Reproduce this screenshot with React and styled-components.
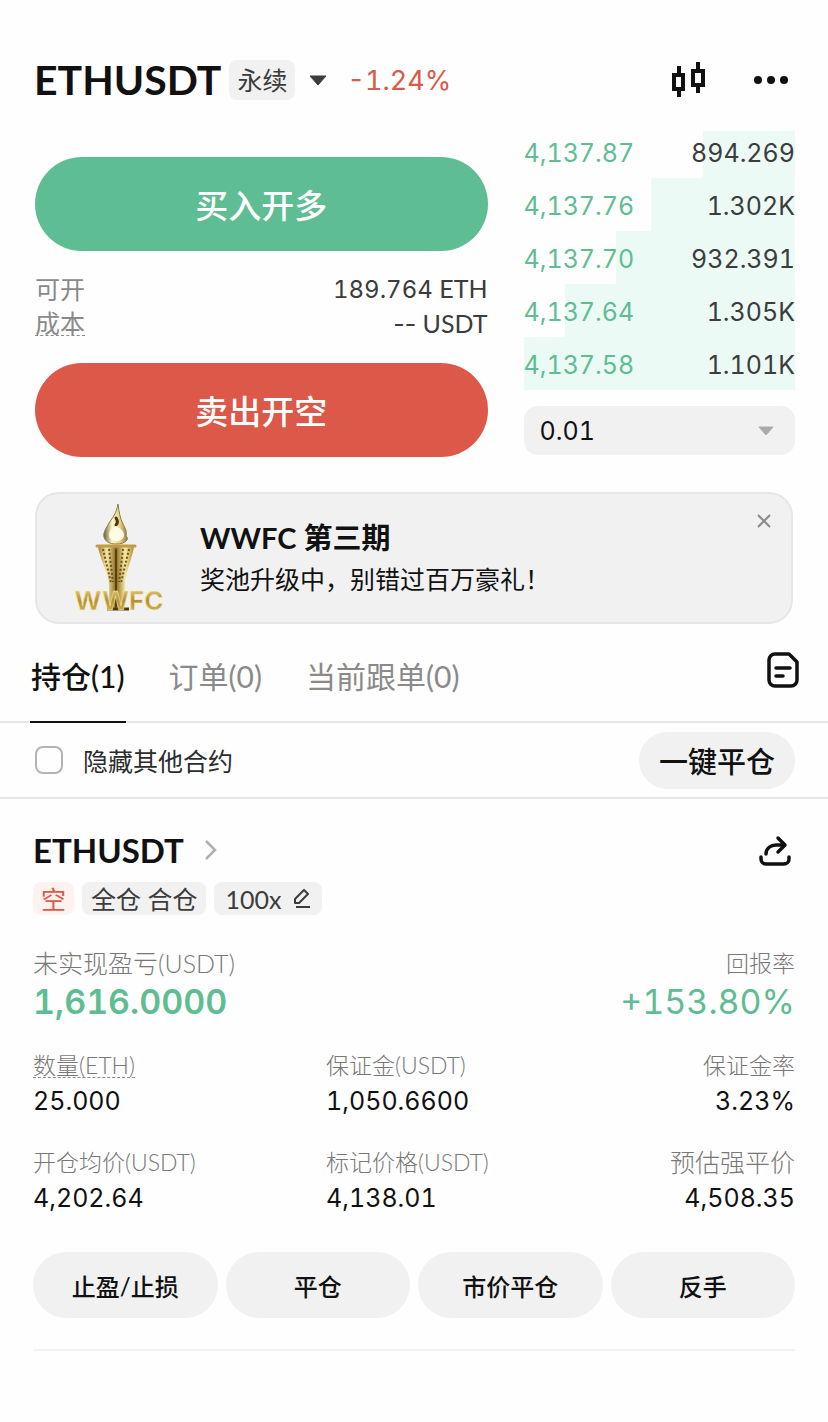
import React, { useState } from 'react'
import styled, { createGlobalStyle, css } from 'styled-components'

const colors = {
  black: '#111111',
  text: '#3c3c3c',
  grey: '#8a8a8a',
  label: '#787878',
  line: '#e6e6e6',
  panel: '#f1f1f1',
  green: '#5ebd93',
  greenPale: '#ecfaf5',
  red: '#dc5848',
  redPale: '#fdf2f0',
}

const fonts = {
  text: 'Lato, "Noto Sans CJK SC", sans-serif',
  digits: 'Inter, "Noto Sans CJK SC", sans-serif',
}

const GlobalStyle = createGlobalStyle`
  * {
    box-sizing: border-box;
  }
  body {
    margin: 0;
    background: #fefefe;
    color: ${colors.black};
    font-family: ${fonts.text};
  }
  button, input, select {
    margin: 0;
    padding: 0;
    border: 0;
    font-family: inherit;
    color: inherit;
  }
  h1, h2, h3, p, ul, dl, dd {
    margin: 0;
    padding: 0;
  }
  svg {
    display: block;
  }
`

const digits = css`
  font-family: ${fonts.digits};
  font-variant-numeric: tabular-nums;
`

const IconButton = styled.button`
  flex: none;
  background: none;
  color: ${props => props.$color || colors.black};
`

const Header = styled.header`
  display: flex;
  align-items: center;
  height: 48px;
  margin-top: 56px;
  padding: 0 39px 0 34px;
`

const Symbol = styled.h1`
  font-size: 41px;
  line-height: 48px;
  font-weight: 700;
`

const ContractType = styled.span`
  margin-left: 8px;
  padding: 0 8px;
  border-radius: 8px;
  background: ${colors.panel};
  color: ${colors.text};
  font-size: 25px;
  line-height: 40px;
`

const SymbolMenu = styled(IconButton)`
  margin-left: 14px;
`

const Change = styled.span`
  ${digits}
  flex: 1;
  margin-left: 20px;
  color: ${colors.red};
  font-size: 27px;
`

const HeaderIcons = styled.div`
  display: flex;
  align-items: center;
  gap: 46px;
`

const Trade = styled.section`
  display: grid;
  grid-template-columns: 5fr 3fr;
  gap: 36px;
  margin-top: 27px;
  padding: 0 33px 0 35px;
`

const OrderColumn = styled.div`
  padding-top: 26px;
`

const OrderButton = styled.button`
  display: block;
  width: 100%;
  height: 94px;
  border-radius: 47px;
  background: ${props => (props.$side === 'buy' ? colors.green : colors.red)};
  color: #fff;
  font-size: 33px;
  font-weight: 500;
`

const OrderInfo = styled.dl`
  margin: 20px 0 22px;
`

const OrderInfoRow = styled.div`
  display: flex;
  justify-content: space-between;
  align-items: center;
  height: 35px;
  font-size: 25px;
  color: ${colors.text};
`

const OrderInfoLabel = styled.dt`
  color: ${colors.grey};
  line-height: 24px;
  border-bottom: ${props => (props.$dashed ? `1px dashed ${colors.grey}` : 'none')};
`

const Amount = styled.span`
  ${digits}
  font-size: 24px;
`

const Empty = styled.span`
  font-family: ${fonts.digits};
`

const Book = styled.ul`
  list-style: none;
`

const BookRow = styled.li`
  display: flex;
  justify-content: space-between;
  align-items: flex-end;
  height: 53px;
  padding-bottom: 11px;
  background: linear-gradient(${colors.greenPale}, ${colors.greenPale}) right / ${props => props.$depth}% 100% no-repeat;
  ${digits}
  font-size: 25px;
  line-height: 28px;
  color: ${colors.text};
  &:first-child {
    height: 47px;
  }
`

const Price = styled.span`
  color: ${colors.green};
`

const StepField = styled.div`
  display: grid;
  align-items: center;
  margin-top: 16px;
  svg {
    grid-area: 1 / 1;
    justify-self: end;
    margin-right: 21px;
    pointer-events: none;
  }
`

const StepSelect = styled.select`
  grid-area: 1 / 1;
  appearance: none;
  width: 100%;
  height: 49px;
  padding: 0 16px;
  border-radius: 14px;
  background: ${colors.panel};
  color: ${colors.black};
  ${digits}
  font-size: 25px;
`

const Banner = styled.aside`
  display: flex;
  align-items: center;
  height: 132px;
  margin: 35px 35px 0;
  padding: 0 19px 0 37px;
  border: 2px solid ${colors.line};
  border-radius: 24px;
  background: ${colors.panel};
`

const BannerText = styled.div`
  flex: 1;
  margin-left: 34px;
`

const BannerTitle = styled.h2`
  font-size: 29px;
  line-height: 42px;
  font-weight: 700;
`

const BannerCopy = styled.p`
  font-size: 25px;
  line-height: 40px;
`

const CloseButton = styled(IconButton)`
  align-self: flex-start;
  margin-top: 19px;
`

const TabBar = styled.div`
  display: flex;
  align-items: flex-start;
  justify-content: space-between;
  height: 99px;
  padding: 28px 29px 0 30px;
  border-bottom: 2px solid ${colors.line};
`

const Tabs = styled.div`
  display: flex;
  gap: 42px;
`

const Tab = styled.button`
  height: 71px;
  padding: 0 1px 24px;
  border-bottom: 2px solid ${props => (props.$active ? colors.black : 'transparent')};
  background: none;
  color: ${props => (props.$active ? colors.black : colors.grey)};
  font-size: 30px;
  font-weight: ${props => (props.$active ? 500 : 400)};
`

const Filter = styled.div`
  display: flex;
  align-items: center;
  justify-content: space-between;
  height: 76px;
  padding: 0 33px 0 35px;
  border-bottom: 2px solid ${colors.line};
`

const FilterLabel = styled.label`
  display: flex;
  align-items: center;
  gap: 20px;
  font-size: 25px;
  color: #2c2c2c;
`

const Checkbox = styled.input`
  appearance: none;
  width: 28px;
  height: 28px;
  border: 2px solid #b4b4b4;
  border-radius: 8px;
  &:checked {
    background: ${colors.black};
  }
`

const PillButton = styled.button`
  height: ${props => (props.$large ? 57 : 66)}px;
  padding: 0 20px;
  border-radius: 33px;
  background: ${colors.panel};
  color: ${colors.black};
  font-size: ${props => (props.$large ? 29 : 24)}px;
  font-weight: 500;
`

const Position = styled.section`
  margin: 0 33px;
  padding: 31px 0 31px;
  border-bottom: 2px solid ${colors.panel};
`

const PositionHead = styled.div`
  display: flex;
  align-items: center;
  justify-content: space-between;
  height: 40px;
  padding-right: 4px;
`

const PositionLink = styled.a`
  display: flex;
  align-items: center;
  gap: 20px;
  color: ${colors.black};
  font-size: 33px;
  line-height: 36px;
  font-weight: 700;
  text-decoration: none;
`

const Tags = styled.div`
  display: flex;
  gap: 8px;
  margin-top: 12px;
`

const Tag = styled.span`
  display: flex;
  align-items: center;
  gap: 12px;
  height: 33px;
  padding: 0 ${props => (props.$short ? 8 : 9)}px;
  border-radius: 8px;
  background: ${props => (props.$short ? colors.redPale : colors.panel)};
  color: ${props => (props.$short ? colors.red : colors.text)};
  font-size: 25px;
  line-height: 32px;
`

const TagButton = styled(Tag).attrs({ as: 'button' })`
  padding: 0 11px;
`

const Row = styled.dl`
  display: grid;
  grid-template-columns: ${props => props.$columns};
  margin-top: ${props => props.$gap}px;
`

const Cell = styled.div`
  text-align: ${props => (props.$right ? 'right' : 'left')};
`

const Label = styled.dt`
  color: ${colors.label};
  font-size: ${props => (props.$large ? 25 : 23)}px;
  line-height: 32px;
  font-weight: 300;
`

const Dashed = styled.span`
  display: inline-block;
  line-height: 24px;
  border-bottom: 1px dashed ${colors.grey};
`

const Value = styled.dd`
  ${digits}
  font-size: 25px;
  line-height: 40px;
`

const Profit = styled(Value)`
  color: ${colors.green};
  font-size: 34px;
  line-height: 46px;
  font-weight: ${props => (props.$bold ? 600 : 400)};
`

const Actions = styled.div`
  display: grid;
  grid-template-columns: repeat(4, 1fr);
  gap: 8px;
  margin-top: 34px;
`

const Caret = ({ width, height, color }) => (
  <svg width={width} height={height} viewBox="0 0 18 11" fill={color} stroke={color} strokeWidth="1" strokeLinejoin="round">
    <path d="M1 1h16L9 10z" />
  </svg>
)

const CandlesIcon = () => (
  <svg width="35" height="36" viewBox="0 0 35 36" fill="none" stroke="currentColor" strokeWidth="4">
    <path d="M7 4v8M7 28v7M2 13h9v14h-9zM26 0v8M26 24v7M21 9h10v14h-10z" />
  </svg>
)

const MoreIcon = () => (
  <svg width="36" height="12" viewBox="0 0 36 12" fill="currentColor">
    <circle cx="5" cy="6" r="4" />
    <circle cx="18" cy="6" r="4" />
    <circle cx="31" cy="6" r="4" />
  </svg>
)

const TorchLogo = () => (
  <svg width="92" height="114" viewBox="0 0 92 114">
    <defs>
      <linearGradient id="gold" x1="0" x2="1">
        <stop offset="0" stopColor="#a5822b" />
        <stop offset="0.25" stopColor="#f6e7a0" />
        <stop offset="0.5" stopColor="#8a6a20" />
        <stop offset="0.75" stopColor="#f8eaa2" />
        <stop offset="1" stopColor="#b08a30" />
      </linearGradient>
      <linearGradient id="letters" x1="0" y1="0" x2="0" y2="1">
        <stop offset="0" stopColor="#f0dc82" />
        <stop offset="0.5" stopColor="#b78f32" />
        <stop offset="1" stopColor="#d9bd5c" />
      </linearGradient>
      <linearGradient id="flame" x1="0" x2="1">
        <stop offset="0" stopColor="#6f6138" />
        <stop offset="0.35" stopColor="#fff6c8" />
        <stop offset="0.7" stopColor="#e6cf7c" />
        <stop offset="1" stopColor="#96793a" />
      </linearGradient>
    </defs>
    <path d="M44 3c-2 10-5 13-9 19-3 6-6 9-5 14 1 4 5 7 12 7 5 0 9-1 11-4 1-2 0-3-1-4 1-5-1-8-3-12-3-6-4-12-5-20z" fill="url(#flame)" stroke="#8a7a4a" />
    <path d="M42 17c2 3 2 5 0 7" fill="none" stroke="#4b3513" strokeWidth="3" strokeLinecap="round" />
    <path d="M42 25c-4 2-7 5-7 9 0 3 3 6 7 6s8-2 8-6-4-7-8-9z" fill="#fffbe6" />
    <path d="M24 46h36c-3 15-9 27-9 38v24H35V84c0-11-8-23-11-38z" fill="url(#gold)" />
    <path d="M29 48l8 34M55 48l-8 34M35 48l4 33M49 48l-4 33" stroke="#6f5518" strokeWidth="2" strokeDasharray="2 2" />
    <path d="M42 48v58" stroke="#59400f" strokeWidth="2" />
    <path d="M23 45h38" stroke="#c29c42" strokeWidth="3" strokeLinecap="round" />
    <path d="M33 108h22" stroke="#4e3810" strokeWidth="3" />
    <text x="45" y="109" textAnchor="middle" fontFamily="Inter, sans-serif" fontSize="26" fontWeight="700" fill="url(#letters)" stroke="#f7edbb" strokeWidth="0.5">WWFC</text>
  </svg>
)

const CloseIcon = () => (
  <svg width="16" height="16" viewBox="0 0 16 16" fill="none" stroke="currentColor" strokeWidth="2">
    <path d="M2 2l12 12M14 2L2 14" />
  </svg>
)

const OrdersIcon = () => (
  <svg width="32" height="36" viewBox="0 0 32 36" fill="none" stroke="currentColor" strokeWidth="3.500" strokeLinecap="round" strokeLinejoin="round">
    <path d="M8 2h14l8 8v18a6 6 0 0 1-6 6H8a6 6 0 0 1-6-6V8a6 6 0 0 1 6-6zM9 16h14M9 24h7" />
  </svg>
)

const ChevronIcon = () => (
  <svg width="14" height="22" viewBox="0 0 14 22" fill="none" stroke="#b0b0b0" strokeWidth="2.500">
    <path d="M2 2l9 9-9 9" />
  </svg>
)

const ShareIcon = () => (
  <svg width="32" height="34" viewBox="0 0 32 34" fill="none" stroke="currentColor" strokeWidth="3.500" strokeLinecap="round" strokeLinejoin="round">
    <path d="M2 24v2a5 5 0 0 0 5 5h18a5 5 0 0 0 5-5v-2" />
    <path d="M7 21C7 15 12 12 17 12h9M19 5l7 7-7 7" />
  </svg>
)

const EditIcon = () => (
  <svg width="18" height="20" viewBox="0 0 18 20" fill="none" stroke="currentColor" strokeWidth="2" strokeLinejoin="round">
    <path d="M2 14v-4L11 1l4 4-9 9zM3 18h14" />
  </svg>
)

const bids = [
  { price: '4,137.87', amount: '894.269', depth: 34 },
  { price: '4,137.76', amount: '1.302K', depth: 53 },
  { price: '4,137.70', amount: '932.391', depth: 66 },
  { price: '4,137.64', amount: '1.305K', depth: 85 },
  { price: '4,137.58', amount: '1.101K', depth: 100 },
]

const tabs = ['持仓(1)', '订单(0)', '当前跟单(0)']

const metrics = [
  [
    { label: '数量(ETH)', value: '25.000', dashed: true },
    { label: '保证金(USDT)', value: '1,050.6600' },
    { label: '保证金率', value: '3.23%' },
  ],
  [
    { label: '开仓均价(USDT)', value: '4,202.64' },
    { label: '标记价格(USDT)', value: '4,138.01' },
    { label: '预估强平价', value: '4,508.35', large: true },
  ],
]

const actions = ['止盈/止损', '平仓', '市价平仓', '反手']

const App = () => {
  const [activeTab, setActiveTab] = useState(0)

  return (
    <main>
      <GlobalStyle />
      <Header>
        <Symbol>ETHUSDT</Symbol>
        <ContractType>永续</ContractType>
        <SymbolMenu aria-label="选择合约"><Caret width={18} height={11} color={colors.text} /></SymbolMenu>
        <Change>-1.24%</Change>
        <HeaderIcons>
          <IconButton aria-label="K线"><CandlesIcon /></IconButton>
          <IconButton aria-label="更多"><MoreIcon /></IconButton>
        </HeaderIcons>
      </Header>

      <Trade>
        <OrderColumn>
          <OrderButton $side="buy">买入开多</OrderButton>
          <OrderInfo>
            <OrderInfoRow>
              <OrderInfoLabel>可开</OrderInfoLabel>
              <dd><Amount>189.764</Amount> ETH</dd>
            </OrderInfoRow>
            <OrderInfoRow>
              <OrderInfoLabel $dashed>成本</OrderInfoLabel>
              <dd><Empty>--</Empty> USDT</dd>
            </OrderInfoRow>
          </OrderInfo>
          <OrderButton $side="sell">卖出开空</OrderButton>
        </OrderColumn>
        <div>
          <Book>
            {bids.map(bid => (
              <BookRow key={bid.price} $depth={bid.depth}>
                <Price>{bid.price}</Price>
                <span>{bid.amount}</span>
              </BookRow>
            ))}
          </Book>
          <StepField>
            <StepSelect aria-label="价格精度" defaultValue="0.01">
              <option>0.01</option>
            </StepSelect>
            <Caret width={16} height={10} color="#aaaaaa" />
          </StepField>
        </div>
      </Trade>

      <Banner>
        <TorchLogo />
        <BannerText>
          <BannerTitle>WWFC 第三期</BannerTitle>
          <BannerCopy>奖池升级中，别错过百万豪礼！</BannerCopy>
        </BannerText>
        <CloseButton aria-label="关闭" $color={colors.grey}><CloseIcon /></CloseButton>
      </Banner>

      <TabBar>
        <Tabs role="tablist">
          {tabs.map((tab, i) => (
            <Tab
              key={tab}
              role="tab"
              aria-selected={activeTab === i}
              $active={activeTab === i}
              onClick={() => setActiveTab(i)}
            >
              {tab}
            </Tab>
          ))}
        </Tabs>
        <IconButton aria-label="历史记录"><OrdersIcon /></IconButton>
      </TabBar>

      <Filter>
        <FilterLabel>
          <Checkbox type="checkbox" />
          隐藏其他合约
        </FilterLabel>
        <PillButton $large>一键平仓</PillButton>
      </Filter>

      <Position>
        <PositionHead>
          <PositionLink href="#ethusdt">ETHUSDT<ChevronIcon /></PositionLink>
          <IconButton aria-label="分享"><ShareIcon /></IconButton>
        </PositionHead>
        <Tags>
          <Tag $short>空</Tag>
          <Tag>全仓 合仓</Tag>
          <TagButton>100x<EditIcon /></TagButton>
        </Tags>
        <Row $columns="1fr 1fr" $gap={32}>
          <Cell>
            <Label $large>未实现盈亏(USDT)</Label>
            <Profit $bold>1,616.0000</Profit>
          </Cell>
          <Cell $right>
            <Label>回报率</Label>
            <Profit>+153.80%</Profit>
          </Cell>
        </Row>
        {metrics.map((row, i) => (
          <Row key={row[0].label} $columns="5fr 5fr 3fr" $gap={i ? 25 : 24}>
            {row.map((item, j) => (
              <Cell key={item.label} $right={j === 2}>
                <Label $large={item.large}>{item.dashed ? <Dashed>{item.label}</Dashed> : item.label}</Label>
                <Value>{item.value}</Value>
              </Cell>
            ))}
          </Row>
        ))}
        <Actions>
          {actions.map(action => (
            <PillButton key={action}>{action}</PillButton>
          ))}
        </Actions>
      </Position>
    </main>
  )
}

export default App
